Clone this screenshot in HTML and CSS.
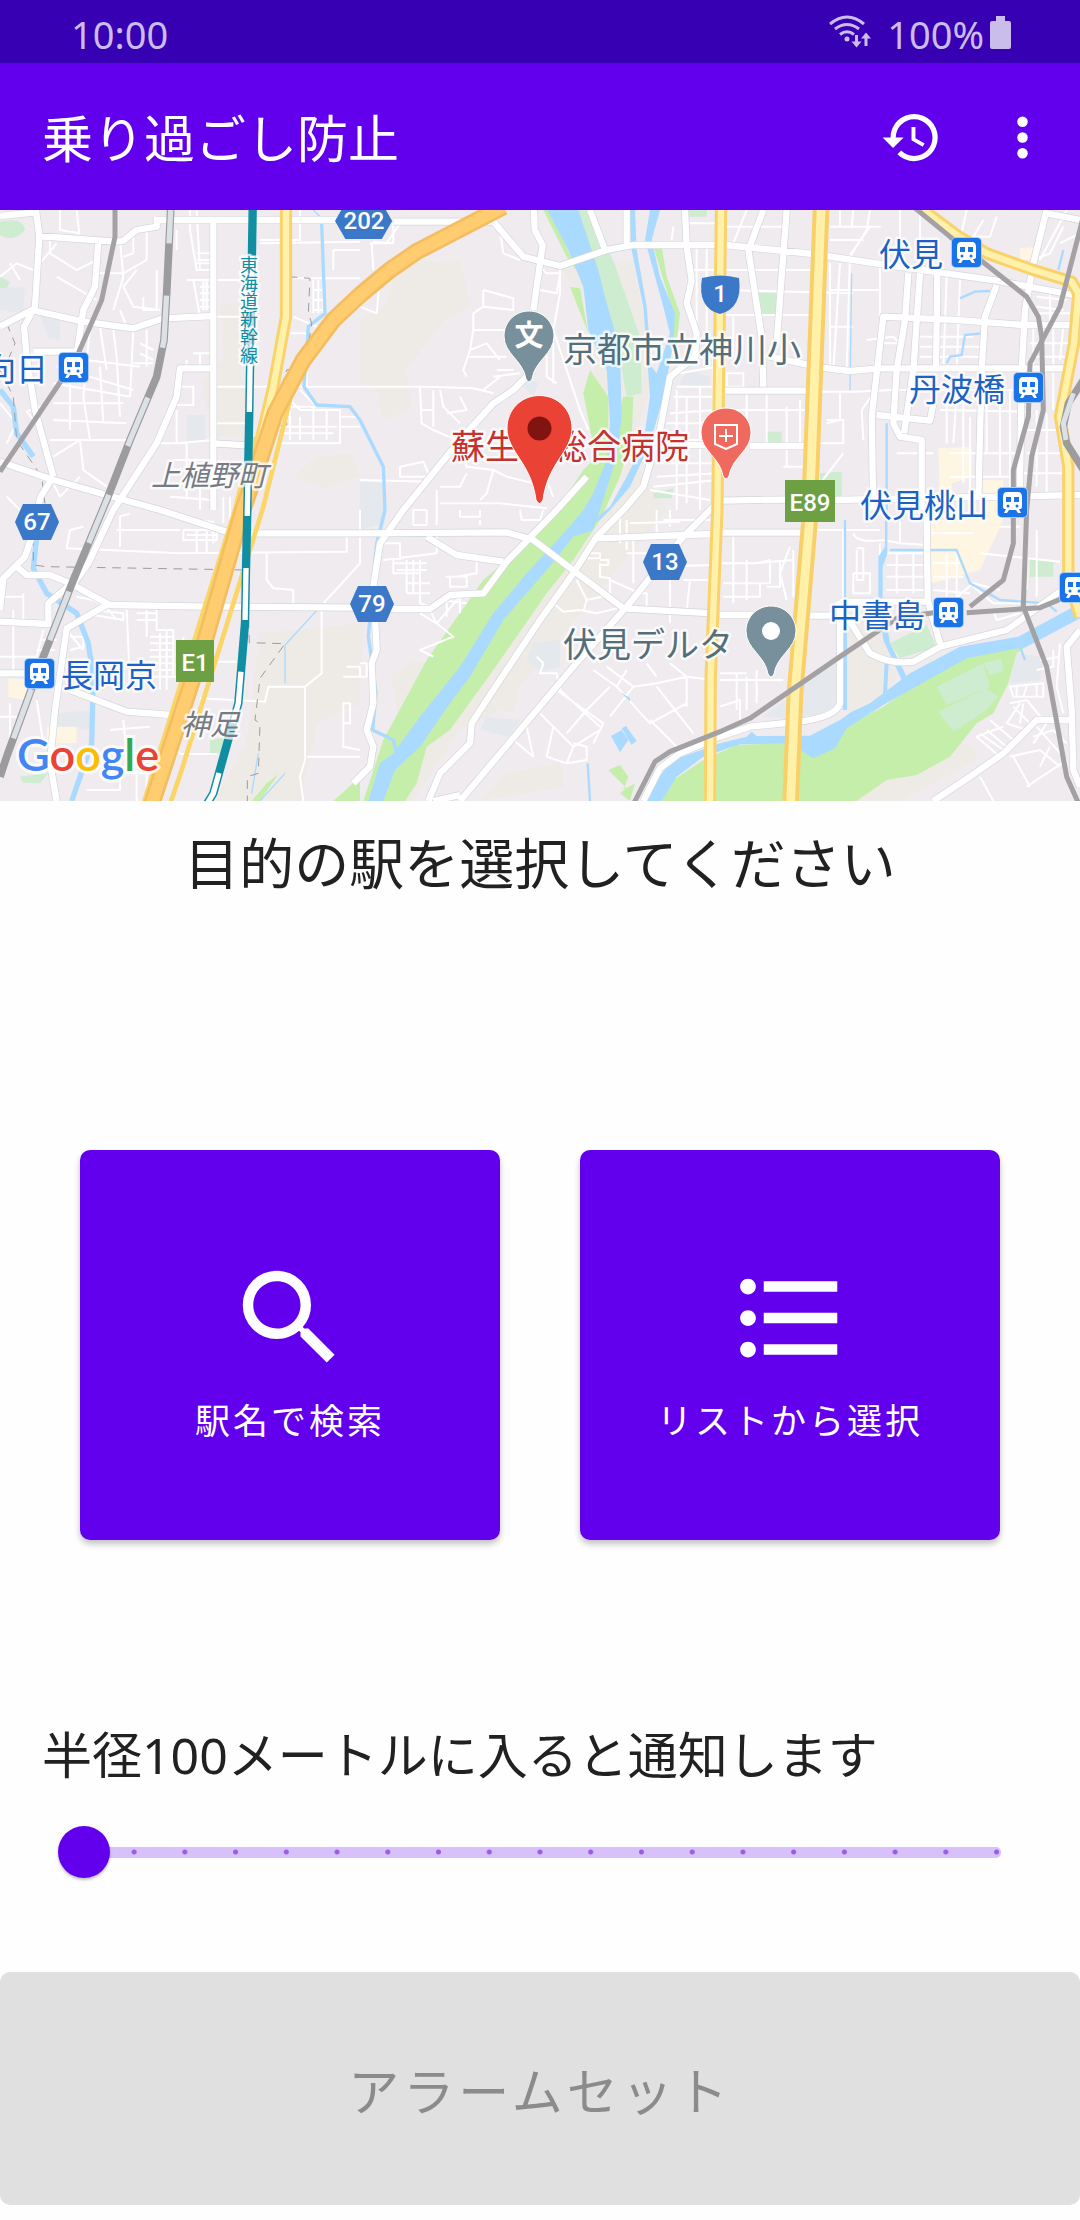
FILE: index.html
```
<!DOCTYPE html>
<html lang="ja">
<head>
<meta charset="utf-8">
<meta name="viewport" content="width=device-width, initial-scale=1">
<title>乗り過ごし防止</title>
<link rel="stylesheet" href="styles.css">
</head>
<body>
<div class="app">
  <div class="status">
    <span>10:00</span>
    <div class="status-right">
      <svg class="wifi" viewBox="0 0 42 34" aria-hidden="true">
        <g fill="none" stroke="currentColor" stroke-width="3">
          <path d="M1 9Q18-5 35 9M6 14Q18 5 30 14M11 19.500Q18 14 25 19.500"/>
          <path d="M27.500 20V29M37 31V20" stroke-width="3"/>
        </g>
        <g fill="currentColor"><circle cx="18" cy="24" r="2.500"/><path d="M22.500 26.500H32.500L27.500 32.500ZM32 23.500H42L37 17.500Z"/></g>
      </svg>
      <span>100%</span>
      <svg class="battery" viewBox="0 0 21 33" aria-hidden="true"><path fill="currentColor" d="M6 0H15V5H19Q21 5 21 7V31Q21 33 19 33H2Q0 33 0 31V7Q0 5 2 5H6Z"/></svg>
    </div>
  </div>

  <header class="bar">
    <h1>乗り過ごし防止</h1>
    <div class="actions">
      <button class="icon-button" aria-label="履歴">
        <svg viewBox="0 0 24 24"><path fill="currentColor" d="M13 3a9 9 0 0 0-9 9H1l3.890 3.890.07.14L9 12H6c0-3.870 3.130-7 7-7s7 3.130 7 7-3.130 7-7 7c-1.930 0-3.680-.79-4.940-2.060l-1.420 1.420A8.950 8.950 0 0 0 13 21a9 9 0 0 0 0-18zm-1 5v5l4.280 2.540.72-1.210-3.500-2.080V8H12z"/></svg>
      </button>
      <button class="icon-button" aria-label="メニュー">
        <svg viewBox="0 0 24 24"><g fill="currentColor"><circle cx="12" cy="6" r="2"/><circle cx="12" cy="12" r="2"/><circle cx="12" cy="18" r="2"/></g></svg>
      </button>
    </div>
  </header>

  <svg class="map" viewBox="0 0 1080 591" role="img" aria-label="地図">
    <defs>
      <g id="roads">
        <path d="M0 18L100 8M108 0L118 80L105 290L72 350L80 440L105 600L160 800M0 350L95 300L250 335L400 355L490 325L640 318M115 78L345 95L370 92L410 60L470 50V20M470 30H1010M295 90L285 230L250 300L232 420M100 425H235M640 30V900M640 475H540L530 560L470 700L340 900L265 1060L215 1130M0 755L160 810L480 900L683 966M160 800L122 860L95 980L75 1040L10 1105L0 1200M50 1070L80 1095H150L210 1120L330 1185L620 1190M660 1190L1080 1193M320 1185L200 1255L165 1500L150 1660L170 1773M0 1235L145 1242V1180L215 1120M0 1390H80M210 1440L380 1505L515 1515M640 700L740 706"/>
        <path d="M750 970L1080 970L1520 967L1600 990L1870 1195L2140 1210M1100 1197H1290L1350 1155L1450 1150L1520 1055L1670 900L1760 800M1280 980L1370 1035L1510 1055M1602 0L1604 60L1628 105L1600 300M1180 35H1480L1570 140L1680 168L1820 120L1900 105H2150M1770 0L1815 120M1880 0V105M2055 0L2060 110L2075 210L2060 280L2090 370L2085 440L2010 500L1980 660L1950 760L1930 830L1870 900L1790 980L1720 1090L1620 1230L1480 1440L1415 1540L1410 1600L1320 1690L1285 1773M1600 480L1540 540L1480 580L1380 690L1210 900L1140 1000L1120 1130L1130 1320L1115 1360L1120 1480L1100 1560L1120 1610L1110 1670L1060 1720M2150 880L2050 980L1880 1190L1720 1370L1560 1560L1380 1773M1300 1773L1380 1755M1790 985L2140 972M2040 705H2120"/>
        <path d="M2175 105L2440 132L2640 162L2990 212L3220 255M2290 0L2245 120L2285 380L2290 530M2360 0L2330 400M2310 440L2460 472L2550 483L2640 475H3200M2165 542H2420M2250 708H2415M2160 872L2400 868M2500 870L3240 855M2725 190L2715 330L2690 480L2680 640L2700 680L2765 690V900M2760 190L2740 480L2712 670M2812 190L2808 480M2620 900L2615 620L2650 320L2870 330L3070 345H3220M2630 615L2790 632L2800 580M2990 225L2955 320L2945 480L2935 870M3140 0L3100 160L3075 300L3065 480L3060 830M3140 10L3240 30"/>
        <path d="M2160 968H2405M2160 1215H2350M2430 1217H2500M2780 920L2783 1170L2820 1300M2520 1180V1480Q2510 1520 2400 1535L2250 1550L2160 1580L2040 1630L1980 1675L1930 1773M2510 1175L2560 1250L2610 1330Q2670 1365 2740 1355L2820 1310L3020 1260L3180 1145M2520 1175H2780M3240 1260L3200 1310L3215 1500L3220 1680L3240 1730M3215 1530H3110L3010 1630L2910 1700L2800 1773"/>
      </g>
      <g id="yellows">
        <path d="M858 0V320L820 530L770 740L720 900"/>
        <path d="M2163 0L2152 900L2132 1400L2130 1773"/>
        <path d="M2770 0L2870 75L2960 130L3100 180L3215 215L3235 250L3222 400L3180 620L3205 770V1100L3240 1220"/>
      </g>
      <path id="e89" d="M2463 0L2432 810L2428 940L2385 1450L2372 1773"/>
      <path id="expressway" d="M1510 -10L1250 125L1170 180L1080 255L1000 330L910 450L825 610L780 750L725 910L610 1310L455 1783"/>
      <path id="jr" d="M512 0L500 250L492 390L470 500L390 690L320 870L220 1110L130 1340L20 1640L0 1700"/>
      <path id="shinkansen" d="M758 0L748 600L742 900L738 1080L735 1240L715 1480L640 1750L620 1783"/>
      <path id="east-line" d="M3250 510L3205 580L3190 650L3200 700L3250 780"/>
      <g id="station">
        <rect x="-1" y="-1" width="31" height="31" rx="5" fill="#a9cdfa"/>
        <rect width="29" height="29" rx="4" fill="#1a73e8"/>
        <path fill="#fff" d="M9 4H20Q24 4 24 9V19Q24 21 21 21L23 25H20L18 22H11L9 25H6L8 21Q5 21 5 19V9Q5 4 9 4Z"/>
        <path fill="#1a73e8" d="M8 9H13V14H8ZM16 9H21V14H16Z"/>
        <circle cx="10" cy="18" r="1.500" fill="#1a73e8"/><circle cx="19" cy="18" r="1.500" fill="#1a73e8"/>
      </g>
      <path id="hex" d="M8 0H36L44 18L36 36H8L0 18Z" fill="#3b78c8"/>
      <path id="poi" d="M25 0C11 0 0 11 0 25C0 43 19 49 22 68Q25 74 28 68C31 49 50 43 50 25C50 11 39 0 25 0Z"/>
    </defs>

    <rect width="1080" height="591" fill="#efebef"/>
    <g transform="scale(.333333)" stroke-linejoin="round">
      <!-- land cover -->
      <g fill="#eeebe6">
        <path d="M1200 160L1380 150L1410 290L1330 330L1220 480L1230 600L1150 630L1130 530L1080 520V330L1150 290Z"/>
        <path d="M660 290L730 270L720 480L740 560L730 680L650 680L600 520L670 450Z"/>
        <path d="M880 800L950 740L1060 730L1080 800L980 835Z"/>
        <path d="M780 1270L1090 1240L1080 1480L950 1540L900 1773H640L740 1600Z"/>
        <path d="M1170 1400L1240 1350L1310 1370L1200 1540Z"/>
        <path d="M1680 170L1760 270L1780 480L1830 640L2000 900L1500 1500L1380 1560L1240 1773H1180L1260 1600L1500 1330L1750 980L1850 860L1960 500L1900 150Z"/>
        <path d="M1450 1380L1560 1440L1540 1510L1440 1480ZM1520 1690L1680 1660L1690 1730L1580 1750L1440 1773Z"/>
        <path d="M2540 1250L2650 1200L2700 1380L2660 1450L2540 1510ZM2600 1720L2860 1590L2920 1610L2930 1650L2700 1773H2560Z"/>
      </g>
      <g fill="#e5e9ed">
        <path d="M120 315L180 325V390L145 385ZM560 615H615V695H560ZM0 235L75 230L70 310L0 300ZM1080 815L1155 820V940L1080 960ZM1600 1300L1680 1290V1370L1620 1385L1580 1350ZM1460 1520L1560 1530L1530 1580L1440 1560Z"/>
        <path d="M170 1510L285 1500V1560L165 1550ZM2060 480L2130 500V530L2040 525ZM2420 1420L2520 1340V1480L2430 1530L2290 1520ZM3050 1330L3130 1340L3120 1410L3030 1420ZM1560 520L1620 510L1600 560Z"/>
      </g>
      <g fill="#fef5e2"><path d="M2815 715L2915 710V800L2855 820L2860 870H2820ZM2940 810H3010V930L2940 1080L2800 1120L2770 1080V970L2790 930H2940ZM25 1405L90 1410L70 1470L25 1460ZM140 1550H230V1600H140ZM3060 115L3110 110L3100 150H3060Z"/></g>
      <g fill="#ceecd0">
        <path d="M0 35Q70 20 75 60Q40 100 0 75ZM0 200L30 215L20 235H0ZM2270 248H2330V312H2270ZM2300 665H2345V700H2300ZM2460 790L2525 785V860L2460 870ZM2045 0H2120V20H2045ZM1960 850L2020 835L2015 865H1960ZM630 1590L690 1580L680 1630H630ZM60 1700L145 1690L120 1720L70 1718ZM3090 1045L3160 1055V1100H3090Z"/>
        <path d="M1720 0H1780L1850 180L1920 380L1925 550L1880 560L1860 450L1830 420L1790 210Z"/>
        <path d="M2670 1300L2780 1245L2810 1310L2700 1345Z"/>
      </g>
      <g fill="#c5eeab">
        <path d="M1630 0L1650 0L1735 190L1700 140ZM1710 230L1740 235L1765 370ZM1770 480L1825 560V720L1790 760L1750 550Z"/>
        <path d="M1960 110H1985L2000 200L2040 310L2030 400L2010 370L2015 290Z"/>
        <path d="M1870 560H1900L1895 680L1860 800L1800 930L1720 1050L1640 1150L1480 1380L1350 1560L1280 1610L1250 1720L1215 1773H1090L1150 1590L1280 1350L1450 1110L1600 980L1670 900L1750 780L1830 700Z"/>
        <path d="M800 1720L835 1692L780 1773H755Z M1000 1773L1080 1700V1773Z"/>
        <path d="M1825 1680L1860 1665L1885 1700L1870 1740L1905 1720L1890 1773L1860 1750L1880 1735Z"/>
        <path d="M1970 1773L2020 1710L2110 1650L2210 1605L2360 1600L2420 1630L2520 1560L2650 1490L2860 1350L3055 1310L3095 1300L3050 1330L3025 1420L2980 1510L2930 1540L2850 1640L2750 1695L2660 1710L2570 1773Z"/>
      </g>
      <path fill="#ceecd0" d="M2810 1430L2950 1360L2970 1430L2840 1485ZM2815 1505L2960 1435L2995 1460L2960 1500L2860 1565ZM2950 1360L3005 1345L3010 1385L2970 1395Z"/>

      <!-- side streets -->
      <g fill="none" stroke="#fff" stroke-width="6">
        <path d="M150 75V130L230 180L290 150M230 0L240 90M180 0V60L240 70M360 90L370 200L340 300M400 70V130L370 140M440 60V150L370 190L290 190M470 180V300H430V260M410 180L370 230L400 290L480 300M120 160L170 100M170 200L290 270M0 200L50 160L100 180M30 160L60 210M360 300L380 350M270 350L250 560M300 350L320 480M340 360L350 440M180 440L420 470M170 470L400 540M160 520L390 560M160 580H370M160 630L380 640M150 690H380M210 470V660M250 560L270 690M300 470L310 640M350 440L360 620M400 360L390 560M420 400L460 420M420 430L460 450M400 460H460M440 360V470M160 740L240 690L250 780L320 830M240 800L180 860L160 820M80 605L120 590L110 640ZM0 580L50 640L20 700M20 860L60 900"/>
        <path d="M530 60V120M570 0V60L590 180H630M590 0L600 180M590 130H635M590 150H635M590 160H635M580 210L600 320M560 210H740M600 230H635M600 250H635M600 270H635M600 290H635M610 210V300M620 210V300M640 320H740M640 530H1080M640 640H740M580 430H630M600 430V480M560 450V470M540 530H580V585H530M530 600V700L640 690M470 700H560V860M520 750H640M510 860L640 870M600 800V900M670 860V940M690 860V930M780 90H900V40M780 100L1080 95M880 205H1080M900 0V80M970 30H1080M1000 120V180M1000 120H1080M940 210V310M955 210V310M970 210V310M940 240H975M940 270H975M940 300H975M880 320L950 350M870 370H920M920 370V530M860 560L900 600L1020 600V700H830M840 650H1010M840 670H1000M870 600V690M900 620V690M940 590V690M980 600V690M900 540L950 590M870 590H950M1020 650H1080M1080 620H1020"/>
        <path d="M1110 100H1160L1200 40M1115 100L1120 180M1180 40V100L1120 95M1500 60L1510 130L1560 150M1620 170L1640 190H1680L1670 250L1620 240M1680 180V250L1660 360L1740 600L1765 660M1080 530H1280L1420 535L1480 550M1450 240L1540 265V300L1450 290L1450 240M1450 290L1420 310V360L1410 420L1390 480L1400 500M1420 360H1520M1410 420L1460 400L1500 450M1400 440H1520M1490 480H1540M1480 500L1560 490M1450 540L1500 500M1260 530L1265 640L1300 660L1370 690M1260 600H1300M1300 540V650M1320 540L1330 590L1380 640M1340 610L1400 600L1380 560M1080 290L1130 310L1140 200M1640 360V500M1660 380V520M1640 500L1670 520M1200 770L1270 755L1290 800L1200 800ZM1080 810L1290 815M1370 700L1400 770L1480 780L1520 800M1480 780L1460 850L1440 870M1320 830H1380L1400 790M1310 840V900M1320 880H1500L1640 895M1640 810L1660 860M1520 800L1600 820"/>
        <path d="M2050 40H2160M2020 50L2015 90M2060 180H2160M2090 100V460M2110 210H2160M2120 100V430M2040 490L2150 470M2030 530H2150M2020 560H2150M2010 610L2150 600M2000 640H2150M1990 690H2150M1980 760H2150M1970 800L2150 790M1960 830L2150 810M2030 540V900M2060 560V880M2100 530V900M2140 440V900M1950 840L2130 870"/>
        <path d="M2180 50H2360M2200 100L2240 0M2160 180H2440M2160 240L2560 250M2170 315H2440M2200 320V440M2230 490V530H2180V490ZM2170 600H2420M2300 550V700M2240 550V700M2360 590V770H2410M2400 570V700M2350 770H2410M2490 50H2640L2610 50L2540 150M2520 0V50M2560 0L2555 50M2610 0L2600 60L2550 140L2540 480M2490 90H2590M2490 160V480M2520 160L2500 480M2490 240H2640M2490 350H2560M2600 390L2680 380L2700 400L2650 400M2640 150V320M2700 0V160M2760 0V180M2800 140V200M2840 200L2830 480M2880 210L2870 480M2900 0L2880 90M2950 30L2920 80H2970L2990 20M2660 540H3060M2840 530V700M2870 550L2860 700M2890 550V820M2910 620V900M2820 600L3080 605M2760 410H2950M2760 440H2950M2760 380H2920M2690 730H2800M2680 540L2560 545L2460 545M2520 550V630L2480 640M2460 700H2530V630H2480M2460 820L2530 730M2620 550L2585 600L2590 690M2960 540V730M3000 540V800M3030 540V880M2850 730H3060M2850 800H3060M3100 350V480M3130 350L3120 480M3160 350V600M3190 350L3180 450M3090 400H3220M3090 440H3210M3110 260L3200 270M3110 290L3190 300M3100 310H3210M3150 250V340M3110 600V830M3140 610V860M3080 660H3180M3080 730H3190M3070 790H3190M3190 50L3150 130L3100 150M3200 0L3120 150M3240 70L3180 100"/>
        <path d="M390 910L360 920V1010M350 960H540M250 950L210 960L200 1015L540 1030L1040 1025V970M550 960H650V990H550ZM560 975H650M590 960V1030M620 960V1030M540 930L640 935V1000M800 1030V1110L820 1135L880 1140V1185M1080 900V1060L970 1180M10 1160H70V1200M70 1150V1240M230 1160L280 1170L320 1190M280 1200L370 1210V1230L280 1215M310 1180L350 1230M200 1260L250 1320M210 1280H250V1310L210 1320M380 1200L390 1420M410 1210H470V1230H410M440 1200V1280M470 1200V1260H520V1400M480 1270V1440M500 1260V1440M450 1280H520M450 1300H520M450 1320H520M450 1340H520M450 1360H520M450 1380H520M450 1400H560M550 1280V1400M40 1200L40 1380M0 1340H110L130 1260M120 1290H170M110 1320H165M30 1480V1600M0 1520H50M110 1470L130 1600M600 1465L795 1475L805 1430H915L965 1390V1200M600 1355H710M915 1430V1650L900 1700L910 1773M540 1632H650M330 1560L450 1550M330 1630L540 1625M370 1530L380 1640M920 1640H1080M1030 1480H1050V1540H1030ZM1030 1540V1610L1080 1620M1040 1370H1080V1400H1030M350 1690H500M360 1640V1740H260M410 1680V1773M440 1680V1773"/>
        <path d="M1240 900H1280V945H1240ZM1310 900V945M1380 900V920H1440V900M1440 930V945M1560 900L1565 930H1620L1630 900M1310 970V1030L1150 1050M1150 1000H1200V1050M1180 1050V1090H1260V1150M1180 1060H1280M1190 1080H1280M1220 1050V1150M1240 1050V1150M1260 1050V1180L1290 1190M1220 1120H1290M1220 1150H1290M1340 1100H1400V1130H1350V1100ZM1430 1050V1090L1370 1100M1290 1200L1310 1240L1360 1280L1260 1320L1300 1340M1260 1210L1310 1240L1380 1160M1320 1170L1400 1180M1340 1160V1220M1380 1160V1210M1080 1360H1100V1400H1080M1610 1340L1630 1360L1620 1390H1670L1680 1440L1700 1460M1660 1180L1690 1205L1740 1200L1790 1210L1870 1190M1730 1110L1760 1170L1750 1205M1760 1170L1830 1155M1760 1030H1800V1045H1760M1800 1050H1825V1065H1800M1800 1060V1100L1830 1105V1150M1860 920V1000M1880 930V1020M1900 970V1120M1880 1030H1960M1830 1110L1920 1150H1940V1210M1970 900V970M2010 900V950M1990 930H2140M1890 940L2040 935M1960 1070L2140 1065M2010 1110V1190M2050 1110H2140M2070 1110L2060 1200M2010 1210V1240M1780 1380L1850 1430L1950 1540L2060 1480M1830 1430L1760 1500L1700 1570M1820 1370L1900 1430L1970 1420L2060 1400L2140 1410M1900 1430L1830 1520M1850 1430L1880 1380M1970 1430L2080 1570M1940 1360L1970 1400M2010 1360L2060 1400V1490M1950 1530L2030 1610M1680 1440L1800 1550M1620 1510L1720 1610L1800 1560M1660 1550L1640 1640L1700 1660L1760 1650V1610L1720 1600M1670 1440L1810 1540L1780 1600M1700 1660L1720 1610M1540 1590L1600 1640L1580 1550L1560 1570"/>
        <path d="M2165 1060H2260L2380 1050M2200 980V1180M2240 1050V1170M2270 1060L2310 1050V1120H2170M2170 1160H2280V1120M2340 1050V1130H2300M2370 1010L2340 1090L2360 1170M2380 1020V1160M2160 1390H2240M2240 1400V1500M2270 1380V1480M2210 1390V1500M2160 1490L2220 1470V1530M2160 1410L2350 1410M2410 960H2640M2560 970Q2570 1000 2650 990L2700 1000M2570 1020V1110H2590V1015H2570M2560 1090H2610V1150H2560V1090M2640 1000V1140M2660 1030H2780M2660 1065H2780M2660 1100H2780M2690 1030V1150M2740 1030V1150M2530 960V1170M2660 1140H2780M2700 930V1000L2780 1005M2840 1030V1160M2870 1030V1180M2800 1060H2880M2800 1100H2890M2800 1140L2910 1150M2850 1180L2920 1120L3000 1140M2790 970H2920M2940 1030L3180 1055M2980 1200L2990 1230L3060 1210M2920 1130L2980 1180H3060M3000 950H3060M3080 930V1140M3110 960V1160M3180 1120V1180"/>
        <path d="M3030 1430L3130 1420V1460L3040 1460ZM3050 1430V1460M3080 1430L3070 1460M3110 1425V1460M3030 1480L3080 1470L3130 1530M3040 1490L3090 1540M3060 1480L3020 1540L3080 1560M3070 1480L3060 1540M3010 1550L2930 1580L3000 1640L3040 1590L2970 1530M2940 1570L3010 1620M2960 1560L3020 1610M2980 1540L3040 1590M3040 1640L3090 1730M3030 1640L3120 1620L3180 1670M3080 1730L3200 1650M3100 1580L3160 1560L3200 1600M3110 1550L3190 1640M3140 1540L3100 1600M3150 1610L3120 1670M2940 1700L2980 1773M3120 1350L3180 1340M3110 1380L3160 1370V1320M3180 1300L3170 1430L3190 1510"/>
      </g>

      <!-- water -->
      <g fill="#aadaff">
        <path d="M1642 0H1735L1795 180L1820 280L1860 420L1865 620L1850 740L1800 900L1780 960L1720 980L1640 1080L1510 1230L1410 1400L1350 1480L1260 1610L1185 1680L1150 1773H1105L1140 1660L1180 1630L1260 1520L1380 1370L1480 1210L1580 1090L1700 960L1750 900L1780 850L1820 750L1830 640L1820 480L1765 360L1750 230L1705 120Z"/>
        <path d="M1888 0H1905L1910 120L1940 290L1955 470L1970 490L2010 370L1990 290L1935 90L1950 0H1980L1955 90L1980 200L2025 310L2020 400L1990 560L1950 700L1890 830L1830 900L1800 930L1770 940L1830 890L1880 800L1930 700L1950 560L1930 290L1895 120Z"/>
        <path d="M1935 1773L1960 1720L2020 1650L2160 1600L2240 1580L2255 1565L2270 1578L2430 1577L2520 1530L2555 1505L2610 1480L2730 1390L2880 1310L3055 1280L3240 1180V1225L3080 1310L2900 1345L2650 1485L2540 1555L2505 1615L2440 1645L2400 1620V1600L2220 1603L2110 1640L2030 1700L1985 1773Z"/>
        <path d="M1833 1578L1865 1560L1885 1590L1860 1627ZM1865 1555L1878 1548L1910 1592L1895 1605ZM1860 1445L1890 1465V1475Z"/>
        <path d="M2662 900V1030L2648 1070V1170L2670 1300L2720 1400L2705 1410L2650 1290L2635 1170V1040L2655 1010V900Z"/>
      </g>
      <g fill="none" stroke="#aadaff" stroke-width="10">
        <path d="M965 40L975 310L925 350L912 530L950 585L1050 590L1080 630M1080 630L1150 770L1155 900L1130 1000L1120 1100L1105 1280L1115 1350L1128 1450L1118 1560L1180 1590L1190 1630" />
        <path d="M0 540L40 590L50 670L100 740M110 980L100 1075L140 1150L230 1210L265 1300L280 1400L275 1600L215 1773" stroke-width="16"/>
        <path d="M940 0L970 30M970 1180L855 1305V1420M855 1690L780 1773M775 1630L755 1750M2555 190L2550 540" stroke-width="4"/>
        <path d="M2660 640V900M2840 460L2850 440L2885 435L2895 375L2945 370L2970 330M2880 265L2925 245L2970 243M2670 1020H2870L2910 1120L3000 1170L3140 1180M3140 1180L3170 1205M2535 930V1480M3060 1310L3075 1350M1763 1660L1770 1773M3190 120L3175 180" stroke-width="7"/>
        <path d="M2535 1200V1500M2660 1360L2655 1450" stroke-width="12"/>
      </g>

      <g fill="none" stroke="#9b9ba0" stroke-width="3" stroke-dasharray="26 20">
        <path d="M100 980V1065L140 1070L740 1080L748 1298L855 1301L780 1405L765 1530L780 1540L775 1690L742 1700V1773M862 20V200L930 205L925 310L935 340L915 470L860 480L845 530L860 560V645L820 650L800 700L745 710V1080M20 340L45 400L20 460M0 480L40 560L50 690L125 800L135 880"/>
      </g>

      <!-- main roads -->
      <use href="#roads" fill="none" stroke="#d3d6da" stroke-width="23"/>
      <use href="#roads" fill="none" stroke="#fff" stroke-width="19"/>
      <use href="#yellows" fill="none" stroke="#fad26b" stroke-width="37"/>
      <use href="#yellows" fill="none" stroke="#fff1aa" stroke-width="19"/>
      <use href="#e89" fill="none" stroke="#f9cf69" stroke-width="50"/>
      <use href="#e89" fill="none" stroke="#fff1aa" stroke-width="26"/>
      <path d="M870 570L790 890L545 1680L510 1783M760 680L705 900L430 1783" fill="none" stroke="#fbd568" stroke-width="14"/>
      <use href="#expressway" fill="none" stroke="#f4bd60" stroke-width="52"/>
      <use href="#expressway" fill="none" stroke="#ffcd6f" stroke-width="36"/>

      <!-- railways -->
      <g fill="none" stroke="#a3a1a4" stroke-width="15">
        <path d="M345 0V80L305 270L235 430M185 510L0 785"/>
        <path d="M2740 -10L2850 80L2960 165L3080 260L3115 320L3125 380L3130 600L3095 740L3080 900L3070 1190L3140 1370L3200 1700L3240 1790"/>
        <path d="M3250 20L3180 290L3090 460L3085 620L3040 780V1000L3010 1110L2910 1190"/>
        <path d="M2900 1208L3120 1193L3200 1160"/>
        <path d="M1900 1783L1965 1655L2010 1625L2160 1565L2250 1525L2520 1340L2690 1225L2800 1208"/>
        <use href="#jr" stroke="#9c9b9e" stroke-width="23"/>
        <use href="#jr" stroke="#dce1e5" stroke-width="16" stroke-dasharray="157 157" stroke-dashoffset="57"/>
        <use href="#east-line" stroke="#9c9b9e" stroke-width="22"/>
        <path d="M3220 550L3190 640L3198 690" stroke="#dce1e5"/>
        <use href="#shinkansen" stroke="#128ea3" stroke-width="25"/>
        <use href="#shinkansen" stroke="#fff" stroke-width="16" stroke-dasharray="156 156" stroke-dashoffset="-138"/>
      </g>
    </g>

    <!-- route shields -->
    <use href="#hex" transform="translate(335 -7) scale(1.300 1)"/>
    <use href="#hex" x="15" y="294"/>
    <use href="#hex" x="350" y="376"/>
    <use href="#hex" x="643" y="334"/>
    <path d="M702 68Q720 63 739 68Q743 98 720 104Q697 98 702 68Z" fill="#3b78c8"/>
    <path d="M785 270H835V312H785ZM176 430H214V472H176Z" fill="#6da043"/>
    <g class="shield">
      <text x="364" y="19">202</text><text x="37" y="320">67</text><text x="372" y="402">79</text><text x="665" y="360">13</text><text x="720" y="92">1</text>
      <text x="810" y="301">E89</text><text x="195" y="461">E1</text>
    </g>

    <!-- place names -->
    <g class="label area"><text x="151" y="276">上植野町</text><text x="181" y="525">神足</text></g>
    <text class="label line" x="249" y="46">東海道新幹線</text>
    <g class="label stop">
      <text x="-16" y="171">向日</text><text x="879" y="56">伏見</text><text x="909" y="191">丹波橋</text><text x="860" y="307">伏見桃山</text><text x="829" y="417">中書島</text><text x="61" y="477">長岡京</text>
    </g>
    <use href="#station" x="59" y="143"/><use href="#station" x="952" y="28"/><use href="#station" x="1014" y="163"/><use href="#station" x="998" y="278"/><use href="#station" x="934" y="388"/><use href="#station" x="1060" y="363"/><use href="#station" x="25" y="449"/>
    <g class="label poi"><text x="563" y="152">京都市立神川小</text><text x="563" y="447">伏見デルタ</text></g>
    <text class="label hospital" x="451" y="249">蘇生会総合病院</text>

    <!-- pins -->
    <g stroke="#fff" stroke-width="1">
      <use href="#poi" x="504" y="101" fill="#78909c"/>
      <use href="#poi" x="746" y="396" fill="#78909c"/>
      <use href="#poi" x="701" y="198" fill="#f0695e"/>
    </g>
    <text class="pin-text" x="529" y="136">文</text>
    <circle cx="771" cy="421" r="9" fill="#fff"/>
    <path d="M715 215H737V234L726 239L715 234ZM726 219V232M719 226H733" fill="none" stroke="#fff" stroke-width="2"/>
    <path d="M539.500 185.500C521 185.500 507 200 507 218C507 242 531 252 536 290Q539.500 297 543 290C548 252 572 242 572 218C572 200 558 185.500 539.500 185.500Z" fill="#ea4335" stroke="#fff" stroke-width="1"/>
    <circle cx="539.500" cy="218.500" r="12" fill="#811411"/>

    <text class="google" x="17" y="561"><tspan fill="#4285f4">G</tspan><tspan fill="#ea4335">o</tspan><tspan fill="#fbbc04">o</tspan><tspan fill="#4285f4">g</tspan><tspan fill="#34a853">l</tspan><tspan fill="#ea4335">e</tspan></text>
  </svg>

  <main>
    <h2>目的の駅を選択してください</h2>
    <div class="choices">
      <button class="choice">
        <svg viewBox="0 0 24 24" aria-hidden="true"><path fill="currentColor" d="M15.500 14h-.79l-.28-.27A6.471 6.471 0 0 0 16 9.500 6.500 6.500 0 1 0 9.500 16c1.610 0 3.090-.59 4.230-1.570l.27.28v.79l5 4.990L20.490 19l-4.990-5zm-6 0C7.010 14 5 11.990 5 9.500S7.010 5 9.500 5 14 7.010 14 9.500 11.990 14 9.500 14z"/></svg>
        駅名で検索
      </button>
      <button class="choice">
        <svg viewBox="0 0 24 24" aria-hidden="true"><path fill="currentColor" d="M4 10.500c-.83 0-1.500.67-1.500 1.500s.67 1.500 1.500 1.500 1.500-.67 1.500-1.500-.67-1.500-1.500-1.500zm0-6c-.83 0-1.500.67-1.500 1.500S3.170 7.500 4 7.500 5.500 6.830 5.500 6 4.830 4.500 4 4.500zm0 12c-.83 0-1.500.68-1.500 1.500s.68 1.500 1.500 1.500 1.500-.68 1.500-1.500-.67-1.500-1.500-1.500zM7 19h14v-2H7v2zm0-6h14v-2H7v2zm0-8v2h14V5H7z"/></svg>
        リストから選択
      </button>
    </div>
    <label class="radius-label" for="radius">半径100メートルに入ると通知します</label>
    <div class="slider"><input id="radius" type="range" min="100" max="1000" step="50" value="100"></div>
    <button class="alarm" disabled>アラームセット</button>
  </main>
</div>
</body>
</html>
```
FILE: styles.css
```
* {
  box-sizing: border-box;
}

body {
  margin: 0;
  background: #fefefe;
  color: #212121;
  font-family: "Noto Sans", "Noto Sans CJK JP", sans-serif;
}

button {
  border: 0;
  padding: 0;
  font-family: inherit;
}

h1,
h2 {
  margin: 0;
  font-weight: 400;
}

.status {
  display: flex;
  justify-content: space-between;
  align-items: center;
  height: 63px;
  padding: 4px 69px 0 71px;
  background: #3700b3;
  color: #cbbdeb;
  font-size: 38px;
  line-height: 56px;
}

.status-right {
  display: flex;
  align-items: center;
}

.wifi {
  width: 42px;
  height: 34px;
  margin: 0 16px 4px 0;
}

.battery {
  width: 21px;
  height: 33px;
  margin: 0 0 2px 6px;
}

.bar {
  display: flex;
  justify-content: space-between;
  align-items: center;
  height: 147px;
  padding: 2px 26px 0 42px;
  background: #6200ee;
  color: #fff;
}

.bar h1 {
  font-size: 51px;
  line-height: 76px;
}

.actions {
  display: flex;
  gap: 48px;
}

.icon-button {
  width: 63px;
  height: 63px;
  background: none;
  color: inherit;
}

.icon-button svg {
  display: block;
}

.map {
  display: block;
  width: 100%;
}

.shield {
  fill: #fff;
  font: 500 24px Roboto, sans-serif;
  text-anchor: middle;
}

.label {
  paint-order: stroke;
  stroke: #ffffffc0;
  stroke-width: 5px;
  stroke-linejoin: round;
  font-family: "Noto Sans CJK JP", sans-serif;
}

.area {
  fill: #757b85;
  font-size: 29px;
  font-style: italic;
}

.line {
  fill: #128ea3;
  font-size: 18px;
  writing-mode: vertical-rl;
}

.stop {
  fill: #1b62c4;
  font-size: 32px;
}

.poi {
  fill: #546e7a;
  font-size: 34px;
}

.hospital {
  fill: #c5322d;
  font-size: 34px;
}

.pin-text {
  fill: #fff;
  font: 700 29px "Noto Sans CJK JP", sans-serif;
  text-anchor: middle;
}

.google {
  paint-order: stroke;
  stroke: #ffffffc0;
  stroke-width: 6px;
  font: 600 45px Lato, sans-serif;
}

main {
  display: flex;
  flex-direction: column;
}

h2 {
  padding-top: 22px;
  font-size: 55px;
  line-height: 80px;
  text-align: center;
}

.choices {
  display: grid;
  grid-template-columns: 1fr 1fr;
  gap: 80px;
  padding: 247px 80px 0;
}

.choice {
  display: flex;
  flex-direction: column;
  align-items: center;
  gap: 12px;
  height: 390px;
  padding-top: 105px;
  border-radius: 10px;
  background: #6200ee;
  box-shadow: 0 4px 6px #0000003d;
  color: #fff;
  font-size: 35px;
  line-height: 56px;
  letter-spacing: 3px;
}

.choice svg {
  width: 126px;
  height: 126px;
}

.radius-label {
  padding: 177px 42px 0;
  font-size: 50px;
  line-height: 76px;
}

.slider {
  display: grid;
  align-items: center;
  height: 52px;
  margin: 33px 58px 0;
}

.slider::before {
  content: "";
  grid-area: 1 / 1;
  height: 11px;
  margin: 0 21px;
  border-radius: 5px;
  background: #d8c1fb;
}

.slider input {
  grid-area: 1 / 1;
  z-index: 1;
  width: 100%;
  height: 52px;
  margin: 0;
  appearance: none;
  background: radial-gradient(circle, #985ce8 2px, transparent 3px) 0 0 / calc(100% / 19) 100%;
}

.slider input::-webkit-slider-thumb {
  appearance: none;
  width: 52px;
  height: 52px;
  border-radius: 50%;
  background: #6200ee;
  box-shadow: 0 2px 3px #00000040;
}

.alarm {
  height: 233px;
  margin: 94px 0 15px;
  border-radius: 10px;
  background: #e0e0e0;
  color: #8b8b8b;
  font-size: 51px;
  letter-spacing: 4px;
}
```
